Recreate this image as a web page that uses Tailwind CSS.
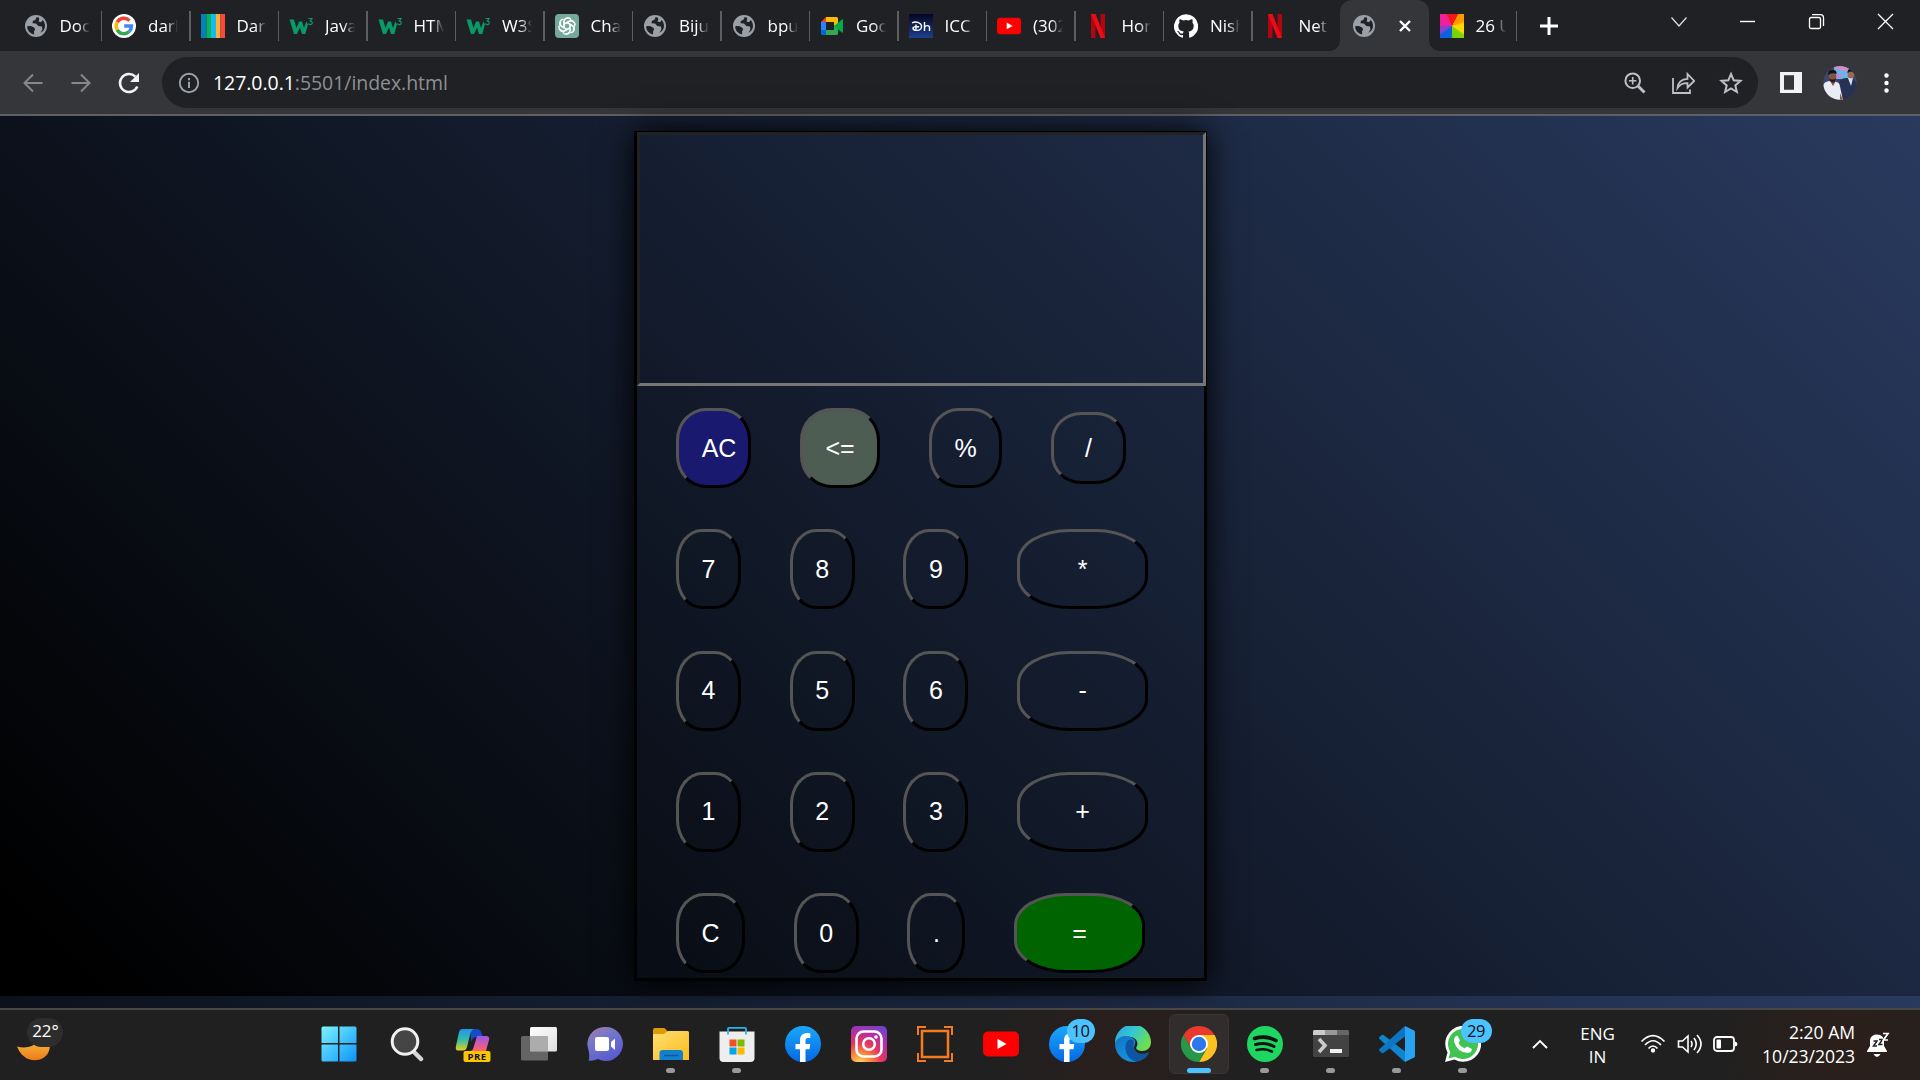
<!DOCTYPE html>
<html lang="en">
<head>
<meta charset="utf-8">
<title>Calculator</title>
<script src="https://cdn.jsdelivr.net/npm/@tailwindcss/browser@4"></script>
</head>
<body class="w-[1920px] h-[1080px] overflow-hidden flex flex-col bg-[#202124] font-['Open_Sans','Noto_Sans',sans-serif] text-white">

<svg width="0" height="0" class="absolute">
  <defs>
    <symbol id="globe" viewBox="0 0 24 24"><circle cx="12" cy="12" r="11" fill="#9aa0a6"/><path d="M3.2 12.6 C5 11.800 7.500 12 9.500 13.200 C11.800 14.600 11 16.500 10 17.200 L10.200 20.500 C6 19.800 3.200 16.500 3.200 12.600Z M12.500 3.200 L11.500 5.800 L8.800 7 L8.600 9.300 L12 9.600 L14.300 12 L18 12.600 L18.400 15.500 L16.400 18.800 C19.500 17.300 21 14.800 21 12 C21 9.600 20 7.500 18.700 6.100 L17 8.300 L14.500 7.600 L15.300 5 L14.800 3.400Z" fill="#202124"/></symbol>
    <symbol id="w3" viewBox="0 0 24 24"><path d="M.5 5.500H5L7.500 14L10 7.500H13L15 14L17.300 7.500L19 10.500L16.300 20H13L11 13.500L8 20H5Z" fill="#0a9a67"/><path d="M19.500 4.500H23L21.300 6.800C24 7 23.700 10.800 21.300 10.700C20.400 10.700 19.800 10.300 19.400 9.700" fill="none" stroke="#0a9a67" stroke-width="1.200"/></symbol>
    <symbol id="netflix" viewBox="0 0 24 24"><path d="M5 0H9.500V24H5ZM14.500 0H19V24H14.500Z" fill="#b1060f"/><path d="M5 0H9.500L19 24H14.500Z" fill="#f00a16"/></symbol>
    <symbol id="yt" viewBox="0 0 36 36"><rect y="5.500" width="36" height="25" rx="5" fill="#f00"/><path d="M14.500 12.800V23L23.500 18Z" fill="#fff"/></symbol>
    <symbol id="fb" viewBox="0 0 36 36"><linearGradient id="fbg" x1="0" y1="0" x2="0" y2="1"><stop stop-color="#19a8fb"/><stop offset="1" stop-color="#0568e4"/></linearGradient><circle cx="18" cy="18" r="18" fill="url(#fbg)"/><path d="M15 36V23.200H10.500V18H15V14.500C15 9.800 17.600 7 22 7C23.700 7 25.300 7.300 25.300 7.300V12H23C21 12 20.500 13 20.500 14.500V18H25.300L24.500 23.200H20.500V36Z" fill="#fff"/></symbol>
  </defs>
</svg>

<!-- Tab strip -->
<header class="h-[51px] shrink-0 flex items-stretch pl-[12.5px] text-[17px] leading-[24px]">
  <div class="w-[88.5px] shrink-0 flex items-center pl-[11px] relative">
    <svg class="size-6 shrink-0"><use href="#globe"/></svg><span class="ml-[12px] w-[30px] overflow-hidden whitespace-nowrap [mask-image:linear-gradient(to_right,#000_60%,transparent)]">Doc</span><i class="absolute -right-px top-[11px] w-[1.500px] h-[30px] bg-[#5c5e62]"></i></div>
  <div class="w-[88.5px] shrink-0 flex items-center pl-[11px] relative">
    <svg class="size-6 shrink-0" viewBox="0 0 24 24"><circle cx="12" cy="12" r="12" fill="#fff"/><g fill="none" stroke-width="3.400"><path d="M5.200 8.200A7.700 7.700 0 0 1 17.500 6.600" stroke="#ea4335"/><path d="M5.200 15.800A7.700 7.700 0 0 1 5.200 8.200" stroke="#fbbc05"/><path d="M17.200 17.600A7.700 7.700 0 0 1 5.200 15.800" stroke="#34a853"/><path d="M12.200 12H19.500C19.500 14.200 18.700 16.200 17.200 17.600" stroke="#4285f4"/></g></svg><span class="ml-[12px] w-[30px] overflow-hidden whitespace-nowrap [mask-image:linear-gradient(to_right,#000_60%,transparent)]">dark</span><i class="absolute -right-px top-[11px] w-[1.500px] h-[30px] bg-[#5c5e62]"></i></div>
  <div class="w-[88.5px] shrink-0 flex items-center pl-[11px] relative">
    <svg class="size-6 shrink-0" viewBox="0 0 24 24"><path d="M0 0H5.500V24H0Z" fill="#0a80b8"/><path d="M5.500 0H10V24H5.500Z" fill="#0ab45a"/><path d="M10 0H15V24H10Z" fill="#12bcec"/><path d="M15 0H19.500V24H15Z" fill="#ffae3c"/><path d="M19.500 0H24V24H19.500Z" fill="#f8493f"/></svg><span class="ml-[12px] w-[30px] overflow-hidden whitespace-nowrap [mask-image:linear-gradient(to_right,#000_60%,transparent)]">Dark</span><i class="absolute -right-px top-[11px] w-[1.500px] h-[30px] bg-[#5c5e62]"></i></div>
  <div class="w-[88.5px] shrink-0 flex items-center pl-[11px] relative">
    <svg class="size-6 shrink-0"><use href="#w3"/></svg><span class="ml-[12px] w-[30px] overflow-hidden whitespace-nowrap [mask-image:linear-gradient(to_right,#000_60%,transparent)]">Java</span><i class="absolute -right-px top-[11px] w-[1.500px] h-[30px] bg-[#5c5e62]"></i></div>
  <div class="w-[88.5px] shrink-0 flex items-center pl-[11px] relative">
    <svg class="size-6 shrink-0"><use href="#w3"/></svg><span class="ml-[12px] w-[30px] overflow-hidden whitespace-nowrap [mask-image:linear-gradient(to_right,#000_60%,transparent)]">HTM</span><i class="absolute -right-px top-[11px] w-[1.500px] h-[30px] bg-[#5c5e62]"></i></div>
  <div class="w-[88.5px] shrink-0 flex items-center pl-[11px] relative">
    <svg class="size-6 shrink-0"><use href="#w3"/></svg><span class="ml-[12px] w-[30px] overflow-hidden whitespace-nowrap [mask-image:linear-gradient(to_right,#000_60%,transparent)]">W3S</span><i class="absolute -right-px top-[11px] w-[1.500px] h-[30px] bg-[#5c5e62]"></i></div>
  <div class="w-[88.5px] shrink-0 flex items-center pl-[11px] relative">
    <svg class="size-6 shrink-0" viewBox="0 0 24 24"><rect width="24" height="24" rx="4" fill="#75a99c"/><g fill="none" stroke="#fff" stroke-width="1.300"><path id="petal" d="M9 13.800V7.500C9 3.200 14.500 2.600 16 5.800M9 10.200L13.500 7.600C15.500 6.500 18 7.200 19 9"/><use href="#petal" transform="rotate(60 12 12)"/><use href="#petal" transform="rotate(120 12 12)"/><use href="#petal" transform="rotate(180 12 12)"/><use href="#petal" transform="rotate(240 12 12)"/><use href="#petal" transform="rotate(300 12 12)"/></g></svg><span class="ml-[12px] w-[30px] overflow-hidden whitespace-nowrap [mask-image:linear-gradient(to_right,#000_60%,transparent)]">Cha</span><i class="absolute -right-px top-[11px] w-[1.500px] h-[30px] bg-[#5c5e62]"></i></div>
  <div class="w-[88.5px] shrink-0 flex items-center pl-[11px] relative">
    <svg class="size-6 shrink-0"><use href="#globe"/></svg><span class="ml-[12px] w-[30px] overflow-hidden whitespace-nowrap [mask-image:linear-gradient(to_right,#000_60%,transparent)]">Biju</span><i class="absolute -right-px top-[11px] w-[1.500px] h-[30px] bg-[#5c5e62]"></i></div>
  <div class="w-[88.5px] shrink-0 flex items-center pl-[11px] relative">
    <svg class="size-6 shrink-0"><use href="#globe"/></svg><span class="ml-[12px] w-[30px] overflow-hidden whitespace-nowrap [mask-image:linear-gradient(to_right,#000_60%,transparent)]">bpu</span><i class="absolute -right-px top-[11px] w-[1.500px] h-[30px] bg-[#5c5e62]"></i></div>
  <div class="w-[88.5px] shrink-0 flex items-center pl-[11px] relative">
    <svg class="size-6 shrink-0" viewBox="0 0 24 24"><path d="M1 8L6 3V8Z" fill="#ea4335"/><path d="M6 3H16.500Q18 3 18 4.500V11L14 12V8H6Z" fill="#fbbc04"/><path d="M1 8H6V16H1Z" fill="#2684fc"/><path d="M1 16H6V21H2.500Q1 21 1 19.500Z" fill="#0066da"/><path d="M6 16H14V12H18V19.500Q18 21 16.500 21H6Z" fill="#34a853"/><path d="M14 12L22 5.500Q23 5 23 6V18Q23 19 22 18.500Z" fill="#00ac47"/></svg><span class="ml-[12px] w-[30px] overflow-hidden whitespace-nowrap [mask-image:linear-gradient(to_right,#000_60%,transparent)]">Goo</span><i class="absolute -right-px top-[11px] w-[1.500px] h-[30px] bg-[#5c5e62]"></i></div>
  <div class="w-[88.5px] shrink-0 flex items-center pl-[11px] relative">
    <svg class="size-6 shrink-0" viewBox="0 0 24 24"><linearGradient id="dh" x1="0" y1="0" x2="0" y2="1"><stop stop-color="#050523"/><stop offset="1" stop-color="#1e3f8c"/></linearGradient><rect width="24" height="24" fill="url(#dh)"/><path d="M3 9C7 6.500 13 9 12.500 13C12 17.500 4.500 17 4 14.500C3.800 12.500 8 12 10 13M7 10.500V15.500M15.500 8V17M15.500 13.500C16.500 11 20.500 11 20.500 13.500V17" fill="none" stroke="#fff" stroke-width="1.400"/></svg><span class="ml-[12px] w-[30px] overflow-hidden whitespace-nowrap [mask-image:linear-gradient(to_right,#000_60%,transparent)]">ICC</span><i class="absolute -right-px top-[11px] w-[1.500px] h-[30px] bg-[#5c5e62]"></i></div>
  <div class="w-[88.5px] shrink-0 flex items-center pl-[11px] relative">
    <svg class="size-6 shrink-0"><use href="#yt"/></svg><span class="ml-[12px] w-[30px] overflow-hidden whitespace-nowrap [mask-image:linear-gradient(to_right,#000_60%,transparent)]">(302</span><i class="absolute -right-px top-[11px] w-[1.500px] h-[30px] bg-[#5c5e62]"></i></div>
  <div class="w-[88.5px] shrink-0 flex items-center pl-[11px] relative">
    <svg class="size-6 shrink-0"><use href="#netflix"/></svg><span class="ml-[12px] w-[29px] overflow-hidden whitespace-nowrap [mask-image:linear-gradient(to_right,#000_60%,transparent)]">Hom</span><i class="absolute -right-px top-[11px] w-[1.500px] h-[30px] bg-[#5c5e62]"></i></div>
  <div class="w-[88.5px] shrink-0 flex items-center pl-[11px] relative">
    <svg class="size-6 shrink-0" viewBox="0 0 24 24"><path fill="#fff" d="M12 .3a12 12 0 0 0-3.800 23.400c.6.100.8-.3.800-.6v-2c-3.300.7-4-1.600-4-1.600-.6-1.400-1.400-1.800-1.400-1.800-1-.7.100-.7.100-.7 1.200 0 1.900 1.200 1.900 1.200 1 1.800 2.800 1.300 3.500 1 0-.8.400-1.300.7-1.600-2.700-.3-5.500-1.300-5.500-6 0-1.200.5-2.300 1.300-3.100-.2-.4-.6-1.600 0-3.200 0 0 1-.3 3.400 1.200a11.500 11.500 0 0 1 6 0c2.300-1.500 3.300-1.200 3.300-1.200.7 1.600.2 2.800.1 3.200.8.800 1.300 1.900 1.300 3.200 0 4.600-2.800 5.600-5.500 5.900.5.400.9 1.100.9 2.200v3.300c0 .3.100.7.800.6A12 12 0 0 0 12 .3"/></svg><span class="ml-[12px] w-[30px] overflow-hidden whitespace-nowrap [mask-image:linear-gradient(to_right,#000_60%,transparent)]">Nish</span><i class="absolute -right-px top-[11px] w-[1.500px] h-[30px] bg-[#5c5e62]"></i></div>
  <div class="w-[88.5px] shrink-0 flex items-center pl-[11px]">
    <svg class="size-6 shrink-0"><use href="#netflix"/></svg><span class="ml-[12px] w-[30px] overflow-hidden whitespace-nowrap [mask-image:linear-gradient(to_right,#000_60%,transparent)]">Net</span></div>
  <div class="w-[88.5px] shrink-0 flex items-center pl-[12px] rounded-t-[12px] bg-[#35363a] relative">
    <i class="absolute -left-[10px] bottom-0 size-[10px] bg-[radial-gradient(circle_at_0_0,transparent_9.5px,#35363a_10px)]"></i>
    <i class="absolute -right-[10px] bottom-0 size-[10px] bg-[radial-gradient(circle_at_100%_0,transparent_9.5px,#35363a_10px)]"></i>
    <svg class="size-6" viewBox="0 0 24 24"><use href="#globe"/></svg>
    <svg class="ml-[23px] size-3" viewBox="0 0 12 12"><path d="M1 1L11 11M11 1L1 11" stroke="#fff" stroke-width="2.400"/></svg></div>
  <div class="w-[88.5px] shrink-0 flex items-center pl-[11px] relative">
    <i class="size-6 shrink-0 bg-[conic-gradient(from_-20deg,#f01818_0_45deg,#ff9a00_50deg_85deg,#ffd800_100deg_140deg,#7ed400_150deg_195deg,#0a62e0_205deg_250deg,#8a3fd0_260deg_285deg,#f0209a_300deg_350deg,#f01818)]"></i><span class="ml-[12px] w-[30px] overflow-hidden whitespace-nowrap [mask-image:linear-gradient(to_right,#000_60%,transparent)]">26 U</span><i class="absolute right-0 top-[11px] w-[1.500px] h-[30px] bg-[#5c5e62]"></i></div>
  <svg class="ml-[22px] mt-[16px] size-5" viewBox="0 0 20 20"><path d="M10 1V19M1 10H19" stroke="#fff" stroke-width="3"/></svg>
  <div class="ml-auto flex w-[276px] mt-[9px] h-6">
    <svg class="w-[69px] h-6" viewBox="0 0 69 24"><path d="M27.500 8.500L35 17L42.500 8.500" fill="none" stroke="#ddd" stroke-width="1.300"/></svg>
    <svg class="w-[69px] h-6" viewBox="0 0 69 24"><path d="M27 12.500H42" stroke="#fff" stroke-width="1.400"/></svg>
    <svg class="w-[69px] h-6" viewBox="0 0 69 24"><rect x="27.500" y="8.500" width="11" height="11" rx="1.500" fill="none" stroke="#fff" stroke-width="1.300"/><path d="M30 5.700H38.500Q41.500 5.700 41.500 8.700V17" fill="none" stroke="#fff" stroke-width="1.300"/></svg>
    <svg class="w-[69px] h-6" viewBox="0 0 69 24"><path d="M27 5L42 20M42 5L27 20" stroke="#fff" stroke-width="1.300"/></svg>
  </div>
</header>

<!-- Toolbar -->
<nav class="h-[65px] shrink-0 bg-[#35363a] border-b-2 border-[#5f6062] flex items-center">
  <svg class="ml-[21px] w-6 h-6" viewBox="0 0 24 24"><path d="M21.500 12H4M12 3.500L3.500 12L12 20.500" fill="none" stroke="#85878a" stroke-width="2"/></svg>
  <svg class="ml-[24px] w-6 h-6" viewBox="0 0 24 24"><path d="M2.500 12H20M12 3.500L20.500 12L12 20.500" fill="none" stroke="#85878a" stroke-width="2"/></svg>
  <svg class="ml-[24px] size-6" viewBox="0 0 24 24"><path d="M20.300 15.500A9 9 0 1 1 18.400 5.700" fill="none" stroke="#f1f3f4" stroke-width="2.500"/><path d="M22 2V11H13Z" fill="#f1f3f4"/></svg>
  <div class="ml-[21px] w-[1596px] h-[51px] rounded-full bg-[#202124] flex items-center pl-[16px] pr-[15px]">
    <svg class="size-[22px]" viewBox="0 0 22 22"><circle cx="11" cy="11" r="9.200" fill="none" stroke="#9aa0a6" stroke-width="1.900"/><path d="M11 9.700V16M11 6V8.200" stroke="#9aa0a6" stroke-width="2"/></svg>
    <span class="ml-[13px] text-[19.5px] tracking-[-0.05px] whitespace-nowrap text-[#8d9093]"><span class="text-white">127.0.0.1</span>:5501/index.html</span>
    <svg class="ml-auto size-6" viewBox="0 0 24 24"><circle cx="9.700" cy="9.700" r="7.300" fill="none" stroke="#bdc1c6" stroke-width="2"/><path d="M15 15L21.500 21.500" stroke="#bdc1c6" stroke-width="3"/><path d="M9.700 6V13.400M6 9.700H13.400" stroke="#bdc1c6" stroke-width="1.600"/></svg>
    <svg class="ml-[24px] size-6" viewBox="0 0 24 24"><path d="M2 7V22H19V18.500" fill="none" stroke="#bdc1c6" stroke-width="1.800"/><path d="M6.500 17C7 11.500 10.500 8 16.500 7.800V3L23.200 10L16.500 16.500V12.200C12 12 9 13.500 6.500 17Z" fill="none" stroke="#bdc1c6" stroke-width="1.800"/></svg>
    <svg class="ml-[24px] size-6" viewBox="0 0 24 24"><path d="M12 3L14.700 9.300L21.500 9.900L16.300 14.400L17.900 21L12 17.500L6.100 21L7.700 14.400L2.500 9.900L9.300 9.300Z" fill="none" stroke="#bdc1c6" stroke-width="2"/></svg>
  </div>
  <svg class="ml-[22px] w-[22px] h-[21px]" viewBox="0 0 22 21"><path d="M0 0H22V21H0ZM4 3.300V17.700H14V3.300Z" fill-rule="evenodd" fill="#f1f3f4"/></svg>
  <svg class="ml-[21px] size-[34px]" viewBox="0 0 34 34"><clipPath id="av"><circle cx="17" cy="17" r="16.800"/></clipPath><g clip-path="url(#av)"><rect width="34" height="34" fill="#3c466c"/><rect x="11" width="15" height="13" fill="#6bb4e4"/><path d="M8 0H28V4L22 5L14 3Z" fill="#d88bc4"/><path d="M13 8H18V12H13Z" fill="#b58bdc"/><path d="M0 20Q1 15 8 15Q17 15 19 22L20 34H0Z" fill="#e9edf5"/><path d="M7 15L10 20L13 15Z" fill="#83553f"/><path d="M16 16Q18 12 24 12Q34 12 34 20V34H20Z" fill="#263154"/><path d="M25 12L28 20L30 12Z" fill="#dbe2f0"/><ellipse cx="9.500" cy="10.500" rx="3.800" ry="5" fill="#83553f"/><path d="M5 8Q6 3 10 4Q14 4 13.500 8Q9 6 5 9Z" fill="#17131b"/><path d="M6 12Q9.500 15 13 12Q12 17 9.500 16.500Q7 16 6 12Z" fill="#2c1c1b"/><ellipse cx="28" cy="8" rx="3.300" ry="4.500" fill="#9c6a50"/><path d="M24.500 6Q25 2 28.500 2.500Q32 3 31 7Q28 4 24.500 7Z" fill="#17131b"/><path d="M17 27L20 34H17Z" fill="#8d5b44"/></g></svg>
  <svg class="ml-[24px] w-[12px] h-6" viewBox="0 0 12 24" fill="#fff"><circle cx="5.500" cy="4.500" r="2.200"/><circle cx="5.500" cy="12" r="2.200"/><circle cx="5.500" cy="19.500" r="2.200"/></svg>
</nav>

<!-- Page -->
<main class="h-[892px] shrink-0 pt-[15px] pl-[634px] bg-[linear-gradient(45deg,#000_3%,#121a2a_46%,#293a5f)] bg-[length:100%_880px] font-['Liberation_Sans',Arial,sans-serif] text-[25px] leading-[29px]">
  <div class="w-[573px] h-[850px] border-black border-x-3 border-b-3 border-t shadow-[0_0_30px_#000]">
    <div class="w-[569px] h-[254px] border-3 border-t-[#222] border-l-[#222] border-r-[#767676] border-b-[#767676]"></div>
    <div class="mt-[22px] ml-[39px] flex flex-col gap-[41.300px]">
      <div class="h-20 flex items-center">
        <button class="w-[75px] h-20 pl-[11px] rounded-[40%] border-3 border-t-[#555] border-l-[#555] border-r-black border-b-black bg-[#191970]">AC</button>
        <button class="ml-[49px] w-[80px] h-20 rounded-[40%] border-3 border-t-[#555] border-l-[#555] border-r-black border-b-black bg-[#4d5d53]">&lt;=</button>
        <button class="ml-[49px] w-[73px] h-20 rounded-[40%] border-3 border-t-[#555] border-l-[#555] border-r-black border-b-black">%</button>
        <button class="ml-[49px] w-[75px] h-[72px] rounded-[40%] border-3 border-t-[#555] border-l-[#555] border-r-black border-b-black">/</button>
      </div>
      <div class="h-20 flex gap-[48.700px]">
        <button class="w-[65px] h-20 rounded-[40%] border-3 border-t-[#555] border-l-[#555] border-r-black border-b-black">7</button>
        <button class="w-[65px] h-20 rounded-[40%] border-3 border-t-[#555] border-l-[#555] border-r-black border-b-black">8</button>
        <button class="w-[65px] h-20 rounded-[40%] border-3 border-t-[#555] border-l-[#555] border-r-black border-b-black">9</button>
        <button class="w-[131px] h-20 rounded-[40%] border-3 border-t-[#555] border-l-[#555] border-r-black border-b-black">*</button>
      </div>
      <div class="h-20 flex gap-[48.700px]">
        <button class="w-[65px] h-20 rounded-[40%] border-3 border-t-[#555] border-l-[#555] border-r-black border-b-black">4</button>
        <button class="w-[65px] h-20 rounded-[40%] border-3 border-t-[#555] border-l-[#555] border-r-black border-b-black">5</button>
        <button class="w-[65px] h-20 rounded-[40%] border-3 border-t-[#555] border-l-[#555] border-r-black border-b-black">6</button>
        <button class="w-[131px] h-20 rounded-[40%] border-3 border-t-[#555] border-l-[#555] border-r-black border-b-black">-</button>
      </div>
      <div class="h-20 flex gap-[48.700px]">
        <button class="w-[65px] h-20 rounded-[40%] border-3 border-t-[#555] border-l-[#555] border-r-black border-b-black">1</button>
        <button class="w-[65px] h-20 rounded-[40%] border-3 border-t-[#555] border-l-[#555] border-r-black border-b-black">2</button>
        <button class="w-[65px] h-20 rounded-[40%] border-3 border-t-[#555] border-l-[#555] border-r-black border-b-black">3</button>
        <button class="w-[131px] h-20 rounded-[40%] border-3 border-t-[#555] border-l-[#555] border-r-black border-b-black">+</button>
      </div>
      <div class="h-20 flex gap-[48.700px]">
        <button class="w-[69px] h-20 rounded-[40%] border-3 border-t-[#555] border-l-[#555] border-r-black border-b-black">C</button>
        <button class="w-[65px] h-20 rounded-[40%] border-3 border-t-[#555] border-l-[#555] border-r-black border-b-black">0</button>
        <button class="w-[58px] h-20 rounded-[40%] border-3 border-t-[#555] border-l-[#555] border-r-black border-b-black">.</button>
        <button class="w-[131px] h-20 rounded-[40%] border-3 border-t-[#555] border-l-[#555] border-r-black border-b-black bg-[#006400]">=</button>
      </div>
    </div>
  </div>
</main>

<!-- Taskbar -->
<footer class="h-[72px] shrink-0 border-t-2 border-[#484847] bg-[#202020] bg-[radial-gradient(circle_at_1120px_30px,#2a1f1d,transparent_130px),radial-gradient(circle_at_1850px_30px,#2c1f1a,transparent_140px)] flex text-[17px] leading-[22px]">
  <div class="w-[307.500px] shrink-0 relative">
    <svg class="absolute left-[16px] top-[18px] size-9" viewBox="0 0 36 36"><linearGradient id="mn" x1="0" y1="0" x2="0" y2="1"><stop offset=".3" stop-color="#f3b83a"/><stop offset="1" stop-color="#ee7a1c"/></linearGradient><path d="M27 5C37 12 36 28 24 31.500C14 34.500 5 29 1 18.500C12 22 24 16 22 8Z" fill="url(#mn)"/></svg>
    <span class="absolute left-[27px] top-[8px] w-[36px] h-[29px] rounded-full bg-[#2d2d2d] text-center text-[17px] leading-[25px] pl-px">22°</span>
  </div>
  <div class="w-[66px] flex justify-center pt-[16px] pr-[3px]"><svg class="size-9" viewBox="0 0 36 36"><linearGradient id="wn" x1="0" y1="0" x2="1" y2="1"><stop stop-color="#7df3fd"/><stop offset="1" stop-color="#0a94fb"/></linearGradient><path d="M2 .5H17V17H.5V2Q.5 .5 2 .5ZM18.500 .5H34Q35.500 .5 35.500 2V17H18.500ZM.5 18.500H17V35.500H2Q.5 35.500 .5 34ZM18.500 18.500H35.500V34Q35.500 35.500 34 35.500H18.500Z" fill="url(#wn)"/></svg></div>
  <div class="w-[66px] flex justify-center pt-[16px]"><svg class="size-9" viewBox="0 0 36 36"><path d="M23.500 24.500L32 33" stroke="#d3d6dc" stroke-width="4.500" stroke-linecap="round"/><circle cx="16" cy="15.500" r="12.800" fill="#454545" stroke="#f1f1f3" stroke-width="3"/></svg></div>
  <div class="w-[66px] flex justify-center pt-[16px] pl-px"><svg class="size-9" viewBox="0 0 36 36"><linearGradient id="c1" x1="0" y1="0" x2="0" y2="1"><stop stop-color="#2094ee"/><stop offset=".5" stop-color="#35bda8"/><stop offset="1" stop-color="#e4cf22"/></linearGradient><linearGradient id="c2" x1="0" y1="0" x2="0" y2="1"><stop stop-color="#9b56ec"/><stop offset="1" stop-color="#ff6468"/></linearGradient><path d="M16 3H22Q25 3 26 6L28 11H21Q18 11 16 16Z" fill="#164cc8"/><path d="M7 3H19Q16 4 15 9L12 21Q11 24.500 8 24.500H3Q0 24.500 1 20L4 6Q5 3 7 3Z" fill="url(#c1)"/><path d="M22 10H31Q35 10 34 14L31 25H15Q18 25 19 20Z" fill="url(#c2)"/><rect x="8.500" y="25" width="27" height="11" rx="2" fill="#fdc600"/><text x="22" y="34" text-anchor="middle" font-family="Open Sans" font-weight="700" font-size="9.500" letter-spacing=".5" fill="#111">PRE</text></svg></div>
  <div class="w-[66px] flex justify-center pt-[16px]"><svg class="size-9" viewBox="0 0 36 36"><linearGradient id="tv" x1="0" y1="0" x2="1" y2="1"><stop stop-color="#fff"/><stop offset="1" stop-color="#dedede"/></linearGradient><rect x="9" y="1" width="27" height="24.500" rx="1.500" fill="url(#tv)"/><rect x="0" y="10" width="27" height="24.500" rx="1.500" fill="#777" fill-opacity=".8"/><path d="M9 10H27V25.500H9Z" fill="#b5b5b5" fill-opacity=".75"/></svg></div>
  <div class="w-[66px] flex justify-center pt-[16px]"><svg class="size-9" viewBox="0 0 36 36"><linearGradient id="ct" x1=".1" y1="0" x2=".7" y2="1"><stop stop-color="#a877a8"/><stop offset=".35" stop-color="#7579c9"/><stop offset="1" stop-color="#5659ce"/></linearGradient><path d="M18 1A17 17 0 1 1 11 33Q6 35.500 1.500 34.500Q3 31 1.500 24A17 17 0 0 1 18 1Z" fill="url(#ct)"/><rect x="8" y="11" width="14" height="14" rx="2" fill="#fff"/><path d="M24 16L28 12.500V24L24 20.500Z" fill="#fff"/></svg></div>
  <div class="w-[66px] flex flex-col items-center pt-[16px]"><svg class="size-9" viewBox="0 0 36 36"><linearGradient id="fo" x1="0" y1="0" x2="1" y2="1"><stop stop-color="#ffde70"/><stop offset="1" stop-color="#fcbd1f"/></linearGradient><path d="M0 4Q0 2 2 2H11Q12 2 15 6H20V12H0Z" fill="#dd9b08"/><path d="M0 8H11L15 5H34.500Q36 5 36 6.500V34H0Z" fill="url(#fo)"/><path d="M6.500 34V27Q6.500 24 9.500 24H27Q30 24 30 27V34Z" fill="#1380cc"/><path d="M11 29.500H25.500" stroke="#0b5a99" stroke-width="1.500"/></svg><i class="mt-[6px] w-[9px] h-[5px] rounded-full bg-[#999]"></i></div>
  <div class="w-[66px] flex flex-col items-center pt-[16px]"><svg class="size-9" viewBox="0 0 36 36"><path d="M9 8V2.500Q9 1.800 10 1.800H26Q27 1.800 27 2.500V8" fill="none" stroke="#2eb0ec" stroke-width="1.800"/><path d="M.5 5.500H35.500V32Q35.500 36 31.500 36H4.500Q.5 36 .5 32Z" fill="#eee"/><path d="M9 5V8.500M27 5V8.500" stroke="#2eb0ec" stroke-width="1.800"/><path d="M10.500 13.500H17.500V20.500H10.500Z" fill="#f25022"/><path d="M18.500 13.500H25.500V20.500H18.500Z" fill="#7fba00"/><path d="M10.500 21.500H17.500V28.500H10.500Z" fill="#00a4ef"/><path d="M18.500 21.500H25.500V28.500H18.500Z" fill="#ffb900"/></svg><i class="mt-[6px] w-[9px] h-[5px] rounded-full bg-[#999]"></i></div>
  <div class="w-[66px] flex justify-center pt-[16px]"><svg class="size-9"><use href="#fb"/></svg></div>
  <div class="w-[66px] flex justify-center pt-[16px]"><svg class="size-9" viewBox="0 0 36 36"><radialGradient id="ig" cx=".25" cy="1.050" r="1.200"><stop stop-color="#ffdc6a"/><stop offset=".25" stop-color="#fb8a3a"/><stop offset=".5" stop-color="#e5365f"/><stop offset=".75" stop-color="#b22fa6"/><stop offset="1" stop-color="#6a45d0"/></radialGradient><rect width="36" height="36" rx="5" fill="url(#ig)"/><g fill="none" stroke="#fff" stroke-width="2.600"><rect x="5.500" y="5.500" width="25" height="25" rx="7"/><circle cx="18" cy="18" r="5.800"/></g><circle cx="25" cy="11" r="1.800" fill="#fff"/></svg></div>
  <div class="w-[66px] flex justify-center pt-[16px]"><svg class="size-9" viewBox="0 0 36 36" fill="none" stroke="#f47b20"><path d="M1 9V1H9M27 1H35V9M35 27V35H27M9 35H1V27" stroke-width="2"/><rect x="5" y="5" width="26" height="26" stroke-width="2.500"/></svg></div>
  <div class="w-[66px] flex justify-center pt-[16px]"><svg class="size-9"><use href="#yt"/></svg></div>
  <div class="w-[66px] flex justify-center pt-[16px] relative"><svg class="size-9"><use href="#fb"/></svg><span class="absolute left-[33px] top-[9px] w-[28px] h-6 rounded-full bg-[#4cc2ff] text-[#111] text-[16.500px] leading-6 text-center tracking-tight">10</span></div>
  <div class="w-[66px] flex justify-center pt-[16px]"><svg class="size-9" viewBox="0 0 36 36"><linearGradient id="e1" x1="0" y1="0" x2="1" y2=".5"><stop stop-color="#2ba0dc"/><stop offset=".5" stop-color="#34c6d4"/><stop offset="1" stop-color="#6bdf50"/></linearGradient><linearGradient id="e2" x1="0" y1="0" x2=".5" y2="1"><stop stop-color="#1474c4"/><stop offset="1" stop-color="#1492dc"/></linearGradient><path d="M0 17A18 18 0 0 1 36 16C36 22 32 25 27 25C22 25 20 23 22 20C24 15 19 10 12 11Q4 12 0 17Z" fill="url(#e1)"/><path d="M0 18C2 9 14 8 19 13Q21 15 20 18L16 32L22 35.500A18 18 0 0 1 0 18Z" fill="url(#e2)"/><path d="M13 14C7 21 12 35 22 35.500C28 35 32 31 34 26.500C34 26 33.500 26 33 26.500C26 30 18 26 18.500 19Q20 12 13 14Z" fill="#0e55a2"/></svg></div>
  <div class="w-[66px] pt-[4px] pl-[3px]"><div class="w-[60px] h-[60px] rounded-md bg-[#312d2c] border border-[#3b3635] flex flex-col items-center pt-[11px]"><svg class="size-9 shrink-0" viewBox="0 0 36 36"><path d="M2.400 9A18 18 0 0 1 33.600 9H18L10.200 22.500Z" fill="#e8392c"/><path d="M33.600 9A18 18 0 0 1 18 36L25.800 22.500L18 9Z" fill="#fdc21f"/><path d="M18 36A18 18 0 0 1 2.400 9L10.200 22.500H25.800Z" fill="#279847"/><circle cx="18" cy="18" r="9" fill="#fff"/><circle cx="18" cy="18" r="7.200" fill="#2b78ee"/></svg><i class="mt-[6px] w-6 h-[5px] shrink-0 rounded-full bg-[#4cc2ff]"></i></div></div>
  <div class="w-[66px] flex flex-col items-center pt-[16px]"><svg class="size-9" viewBox="0 0 36 36"><circle cx="18" cy="18" r="18" fill="#1ed760"/><g fill="none" stroke="#111" stroke-linecap="round"><path d="M7.500 12.500Q19 9 29 14.500" stroke-width="3.600"/><path d="M8.500 18.500Q18.500 15.700 27 20.500" stroke-width="3"/><path d="M9.500 24Q18 21.700 25 25.700" stroke-width="2.500"/></g></svg><i class="mt-[6px] w-[9px] h-[5px] rounded-full bg-[#999]"></i></div>
  <div class="w-[66px] flex flex-col items-center pt-[16px]"><svg class="size-9" viewBox="0 0 36 36"><rect y="4" width="36" height="27" rx="1.500" fill="#434343"/><path d="M0 9V5.500Q0 4 1.500 4H12V9Z" fill="#ccc"/><path d="M12 4H24V9H12Z" fill="#999"/><path d="M24 4H34.500Q36 4 36 5.500V9H24Z" fill="#666"/><path d="M6 13L12 19.500L6 26" fill="none" stroke="#ccc" stroke-width="3.500"/><path d="M17 23H29V27H17Z" fill="#eee"/></svg><i class="mt-[6px] w-[9px] h-[5px] rounded-full bg-[#999]"></i></div>
  <div class="w-[66px] flex flex-col items-center pt-[16px]"><svg class="size-9" viewBox="0 0 36 36"><path d="M26 36V25.500L4.500 9Q3.500 8.500 2.500 9.200L.5 11Q-.5 12 .5 13L25 35.300Z" fill="#1086d0"/><path d="M26 0V10.500L4.500 27Q3.500 27.500 2.500 26.800L.5 25Q-.5 24 .5 23L25 .7Z" fill="#0c76c2"/><path d="M26 0L35 4.500Q36 5 36 6V30Q36 31 35 31.500L26 36Z" fill="#27a3f2"/></svg><i class="mt-[6px] w-[9px] h-[5px] rounded-full bg-[#999]"></i></div>
  <div class="w-[66px] flex flex-col items-center pt-[16px] relative"><svg class="size-9" viewBox="0 0 36 36"><path d="M0 36L2.500 26.500A18 18 0 1 1 9.500 33.500Z" fill="#fff"/><path d="M3.500 32.500L5.300 26A15 15 0 1 1 10 30.700Z" fill="#40c351"/><path d="M12.500 9.500L15 14.500L13.500 17Q15.500 21 19.500 22.500L22 20.500L27 23Q26.500 27 22.500 27Q12 26 9 15.500Q8.500 10.500 12.500 9.500Z" fill="#fff"/></svg><i class="mt-[6px] w-[9px] h-[5px] rounded-full bg-[#999]"></i><span class="absolute left-[31px] top-[9px] w-[31px] h-6 rounded-full bg-[#4cc2ff] text-[#111] text-[16.500px] leading-6 text-center tracking-tight">29</span></div>
  <div class="ml-auto flex pr-[30px]">
    <svg class="mt-[27px] mr-[30px] w-[18px] h-[14px]" viewBox="0 0 18 14"><path d="M2 11L9 4L16 11" fill="none" stroke="#fff" stroke-width="1.900"/></svg>
    <div class="mt-[12px] w-[37px] mr-[24px] text-center text-[17px] leading-[23px]">ENG<br>IN</div>
    <svg class="mt-[23px] mr-[11px] w-[26px] h-[22px]" viewBox="0 0 26 22" fill="none" stroke="#fff" stroke-width="1.700"><path d="M1.500 8.500Q13-3 24.500 8.500M5 12Q13 3.500 21 12M8.500 15.500Q13 10.500 17.500 15.500"/><circle cx="13" cy="17.500" r="1.300" fill="#fff"/></svg>
    <svg class="mt-[23px] mr-[10px] w-[26px] h-[22px]" viewBox="0 0 26 22" fill="none" stroke="#fff" stroke-width="1.600"><path d="M1.500 8H5.500L11 3V19L5.500 14H1.500ZM14 8Q16 11 14 14M17 5Q21.500 11 17 17M20 2Q28 11 20 20"/></svg>
    <svg class="mt-[25px] mr-[23px] w-[25px] h-[18px]" viewBox="0 0 25 18"><rect x="1" y="2" width="20" height="14" rx="3" fill="none" stroke="#fff" stroke-width="1.800"/><rect x="3.500" y="4.500" width="4.500" height="9" rx="1" fill="#fff"/><path d="M22 6.500Q24.500 7 24.500 9T22 11.500Z" fill="#fff"/></svg>
    <div class="mt-[10px] w-[94px] mr-[11px] text-right whitespace-nowrap text-[17.600px] leading-[24px] tracking-[-0.050px]">2:20 AM<br>10/23/2023</div>
    <svg class="mt-[22px] w-[24px] h-[26px]" viewBox="0 0 24 26"><path d="M4 8Q5 2.500 11 2.500Q18 3 18 9V14L21 19V20H1V19L4 14Z" fill="#fff"/><path d="M7.500 22H14.500Q13 25 11 25T7.500 22Z" fill="#fff"/><path d="M7.500 9H11L7.500 14H11M13 7.500H16.500L13 12.500H16.500" fill="none" stroke="#222" stroke-width="1.500"/><path d="M17 1.500H22L17.500 8H22" fill="none" stroke="#fff" stroke-width="1.700"/></svg>
  </div>
</footer>
</body>
</html>
